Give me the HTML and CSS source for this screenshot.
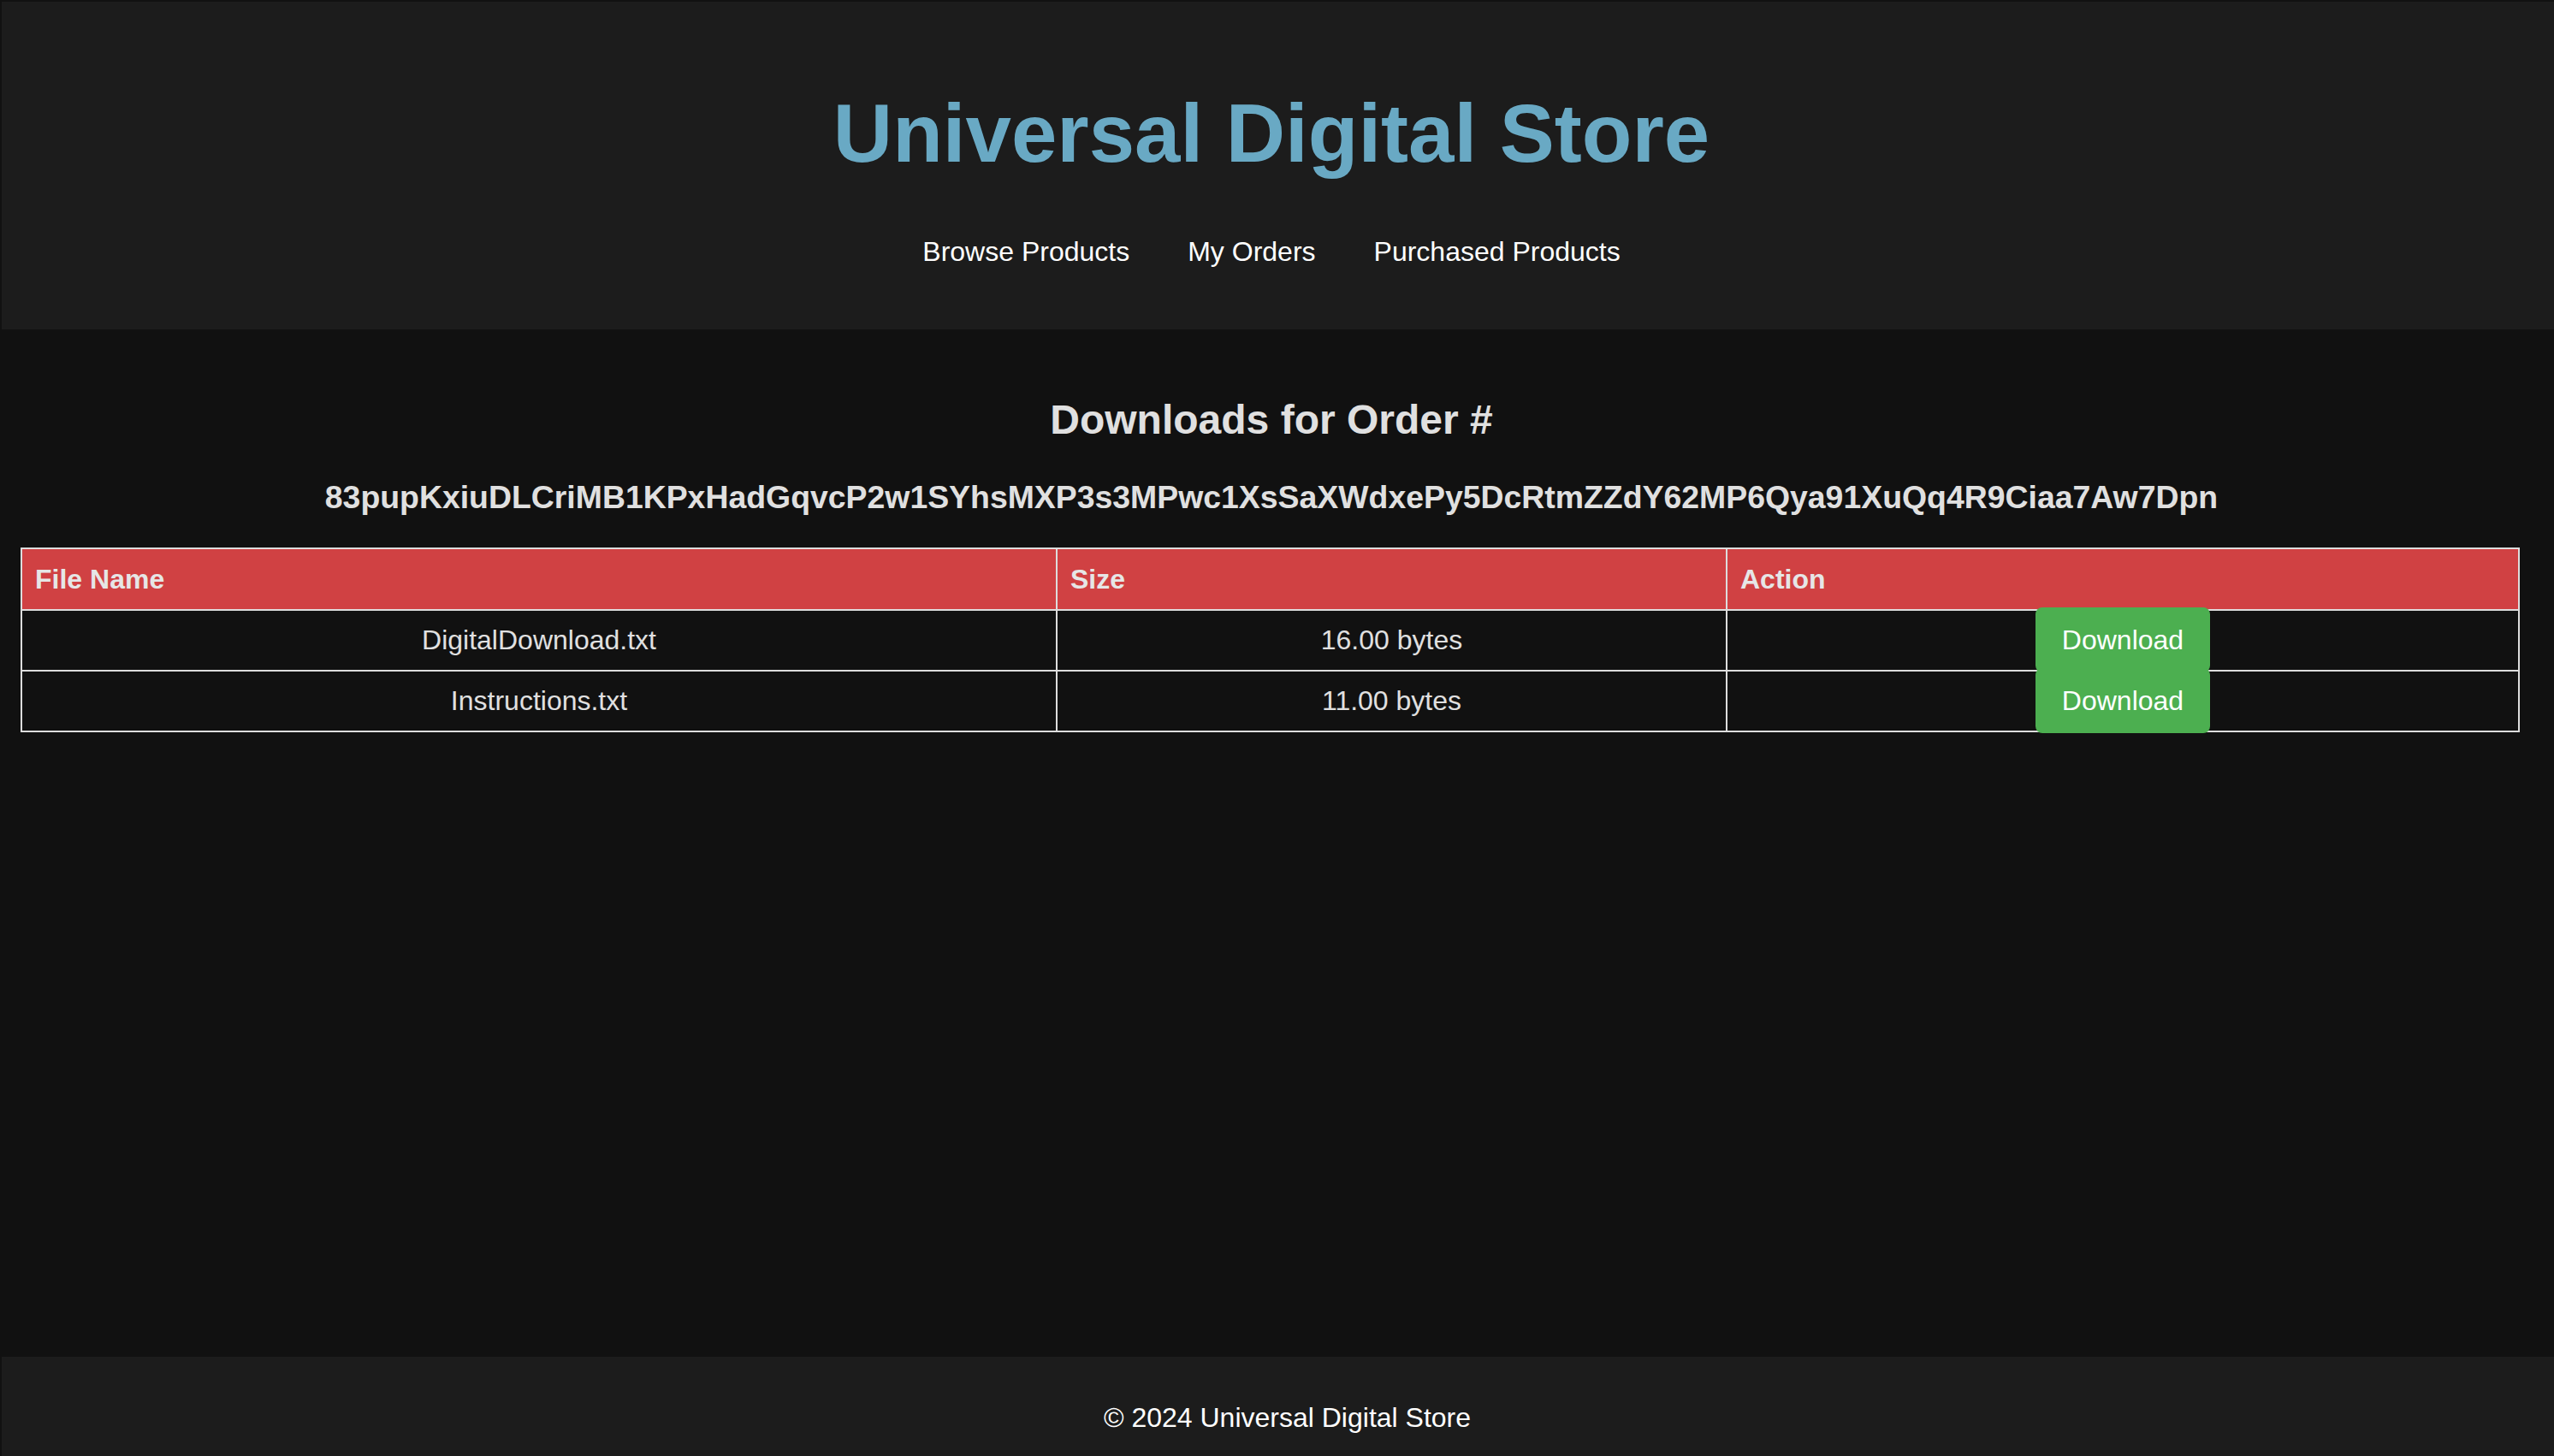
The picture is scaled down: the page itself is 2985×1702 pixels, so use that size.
FILE: index.html
```html
<!DOCTYPE html>
<html lang="en">
<head>
<meta charset="utf-8">
<title>Universal Digital Store - Downloads</title>
<link rel="stylesheet" href="styles.css">
</head>
<body>
<header class="site-header">
  <h1 class="site-title">Universal Digital Store</h1>
  <nav class="site-nav">
    <a href="#" class="nav-link">Browse Products</a>
    <a href="#" class="nav-link">My Orders</a>
    <a href="#" class="nav-link">Purchased Products</a>
  </nav>
</header>
<main class="content">
  <h2 class="page-heading">Downloads for Order #</h2>
  <h3 class="order-id">83pupKxiuDLCriMB1KPxHadGqvcP2w1SYhsMXP3s3MPwc1XsSaXWdxePy5DcRtmZZdY62MP6Qya91XuQq4R9Ciaa7Aw7Dpn</h3>
  <table class="downloads">
    <colgroup>
      <col class="col-name">
      <col class="col-size">
      <col class="col-action">
    </colgroup>
    <thead>
      <tr>
        <th>File Name</th>
        <th>Size</th>
        <th>Action</th>
      </tr>
    </thead>
    <tbody>
      <tr>
        <td>DigitalDownload.txt</td>
        <td>16.00 bytes</td>
        <td><a href="#" class="btn-download">Download</a></td>
      </tr>
      <tr>
        <td>Instructions.txt</td>
        <td>11.00 bytes</td>
        <td><a href="#" class="btn-download">Download</a></td>
      </tr>
    </tbody>
  </table>
</main>
<footer class="site-footer">
  <p class="copyright">&copy; 2024 Universal Digital Store</p>
</footer>
</body>
</html>
```
FILE: styles.css
```css
html, body {
  margin: 0;
  height: 1702px;
}
body {
  box-sizing: border-box;
  padding: 2px 0 0 2px;
  background: #111111;
  color: #e0e0e0;
  font-family: "Liberation Sans", Arial, sans-serif;
  display: flex;
  flex-direction: column;
  overflow: hidden;
}
.site-header {
  background: #1c1c1c;
  height: 383px;
  box-sizing: border-box;
  padding: 99px 15px 0 0;
  text-align: center;
}
.site-title {
  margin: 0;
  font-size: 96px;
  line-height: 110px;
  font-weight: bold;
  color: #69a9c4;
}
.site-nav {
  margin-top: 65px;
  display: flex;
  justify-content: center;
  gap: 68px;
  font-size: 32px;
  line-height: 37px;
}
.nav-link {
  color: #ffffff;
  text-decoration: none;
}
.content {
  flex: 1;
  padding: 78px 15px 0 0;
  text-align: center;
}
.page-heading {
  margin: 0;
  font-size: 48px;
  line-height: 55px;
  font-weight: bold;
  color: #e0e0e0;
}
.order-id {
  margin: 42px 0 0 0;
  font-size: 37.4px;
  line-height: 43px;
  font-weight: bold;
  color: #e0e0e0;
}
.downloads {
  margin: 37px 0 0 22px;
  width: 2919px;
  border-collapse: collapse;
  table-layout: fixed;
  font-size: 32px;
  color: #e0e0e0;
}
.col-name { width: 1210px; }
.col-size { width: 783px; }
.col-action { width: 926px; }
.downloads th,
.downloads td {
  border: 2px solid #dddddd;
  padding: 17px 15px;
}
.downloads th {
  background: #d04143;
  text-align: left;
  font-weight: bold;
  line-height: 36px;
  color: #e6e6e6;
}
.downloads td {
  text-align: center;
  line-height: 35px;
}
.btn-download {
  display: inline;
  background: #4caf50;
  color: #ffffff;
  text-decoration: none;
  padding: 20px 31px;
  border-radius: 8px;
}
.site-footer {
  background: #1c1c1c;
  height: 116px;
  box-sizing: border-box;
  padding: 53px 0 0 22px;
  text-align: center;
}
.copyright {
  margin: 0;
  font-size: 32px;
  line-height: 37px;
  color: #ffffff;
}
```
